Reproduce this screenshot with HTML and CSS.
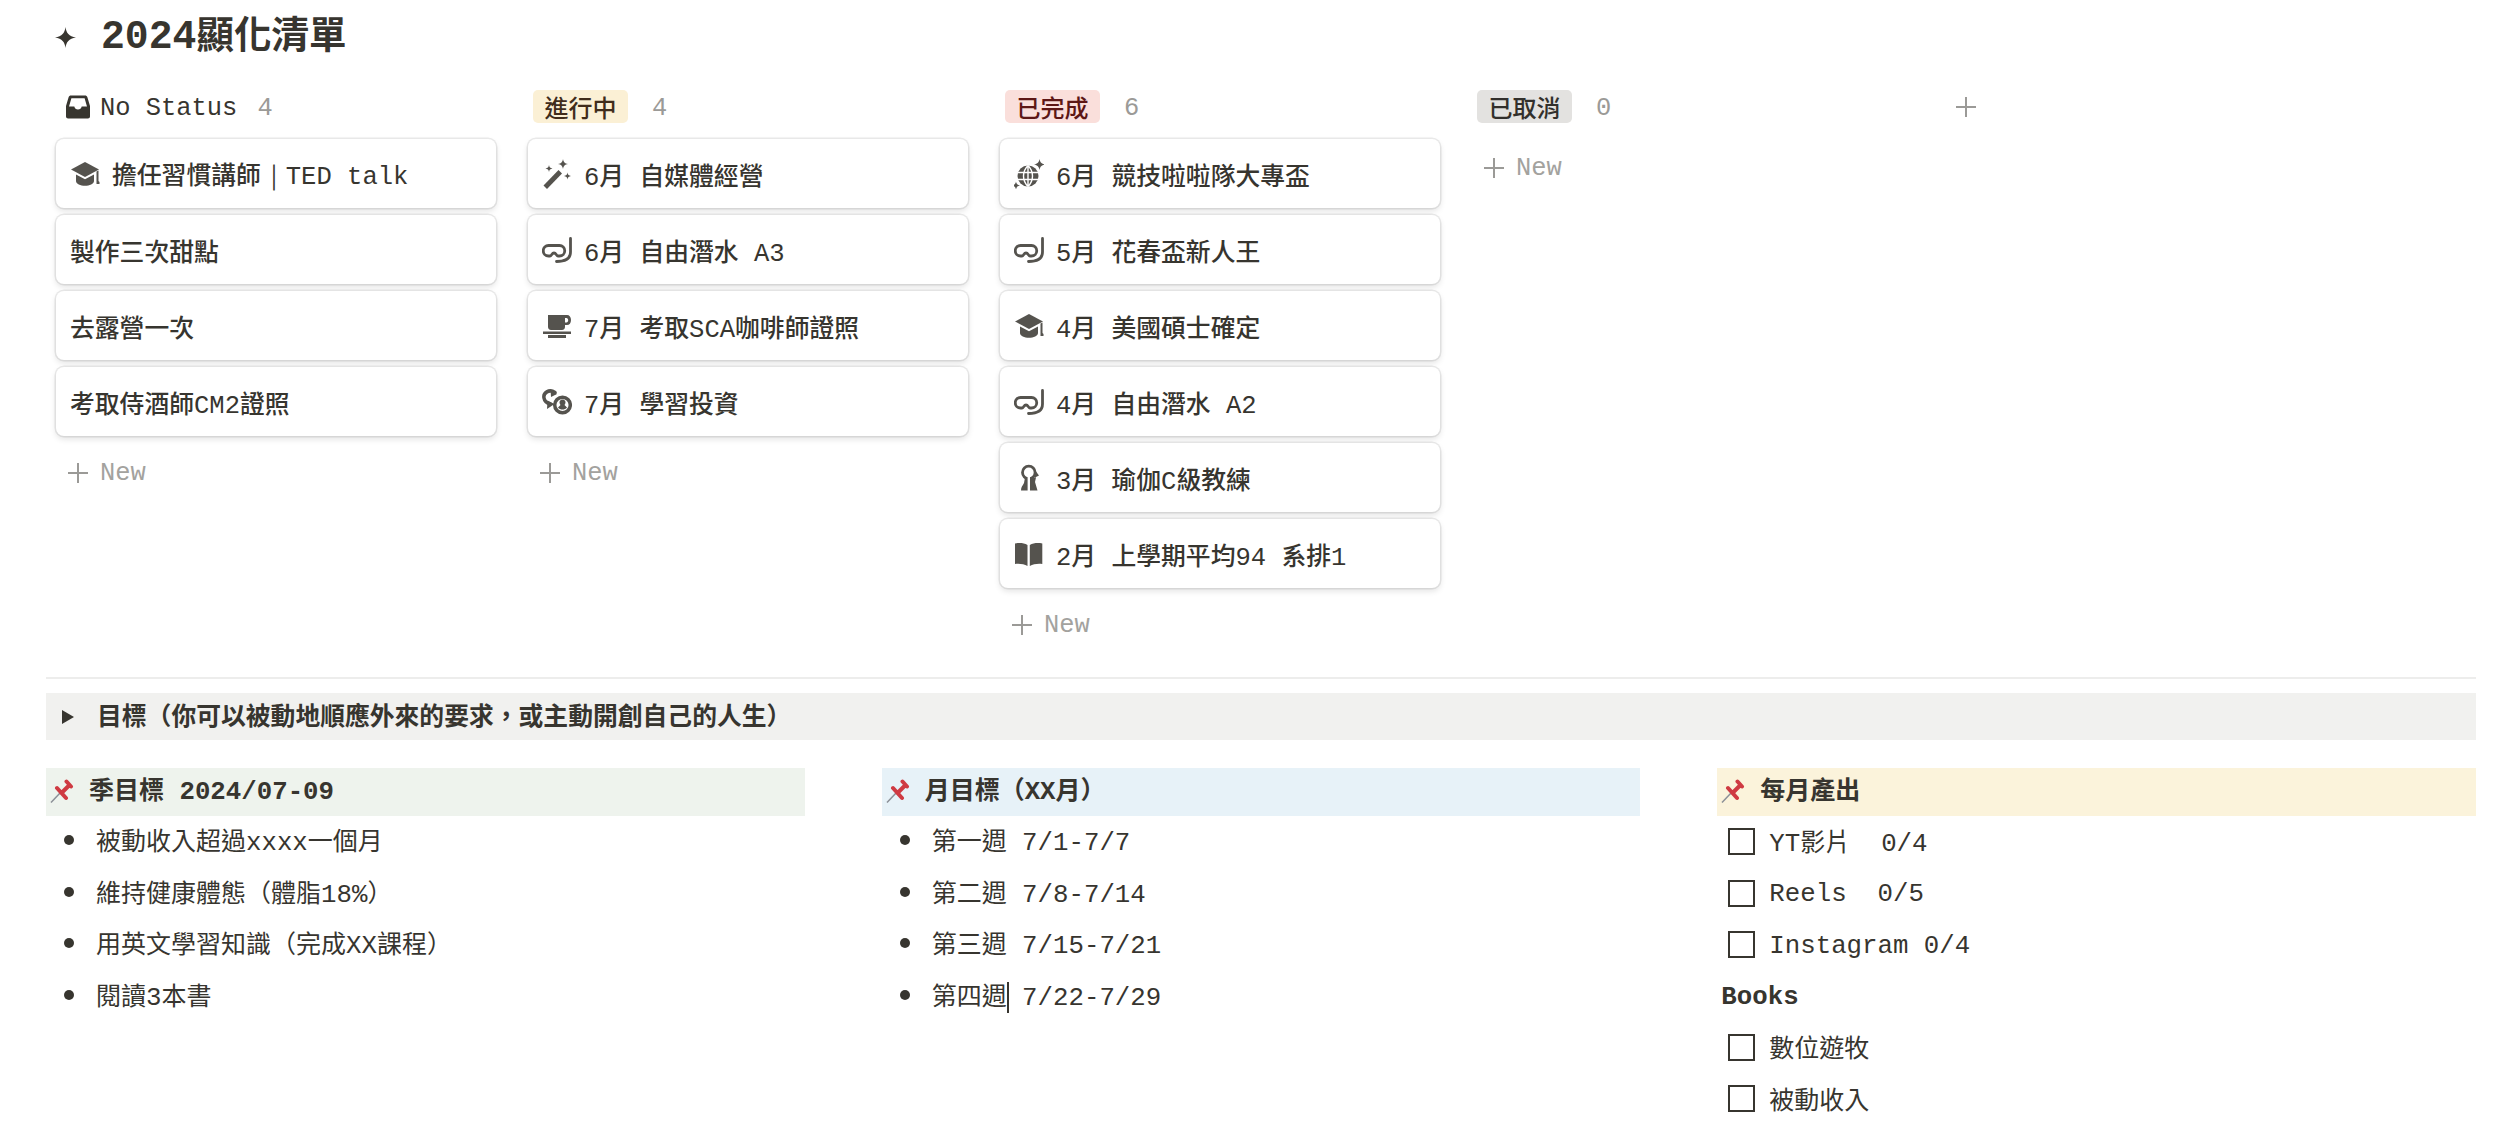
FILE: index.html
```html
<!DOCTYPE html>
<html lang="zh-Hant">
<head>
    <meta charset="UTF-8">
    <meta name="viewport" content="width=device-width, initial-scale=1.0">
    <title>2024顯化清單</title>
    <link rel="stylesheet" href="styles.css">
</head>
<body>

    <!-- icons -->
    <svg class="sprite" xmlns="http://www.w3.org/2000/svg">
        <symbol id="i-star" viewBox="0 0 22 22"><path d="M11 0c.9 6.600 3.400 9.500 11 11-7.600 1.500-10.100 4.400-11 11-.9-6.600-3.400-9.500-11-11 7.600-1.500 10.100-4.400 11-11z"/></symbol>
        <symbol id="i-inbox" viewBox="0 0 24 24"><path fill-rule="evenodd" d="M5 .5h14c1.200 0 2 .6 2.400 1.800L24 11v10.500c0 1.200-1 2-2 2H2c-1 0-2-.8-2-2V11l2.600-8.700C3 1.100 3.800.5 5 .5zm.4 2.700L3 11.500h5.300a3.800 3.800 0 0 0 7.400 0H21l-2.400-8.300z"/></symbol>
        <symbol id="i-cap" viewBox="0 0 30 30"><path d="M15 3 29 10.500 15 18 1 10.500z"/><path d="M6 15.500v6.500c0 2.800 4.500 4.800 9 4.800s9-2 9-4.800v-6.500l-9 4.800z"/><path d="M26.500 12.500v12.500h3v-2l-1-1V11.500z"/></symbol>
        <symbol id="i-wand" viewBox="0 0 30 30"><path d="M1.500 26.500 16.500 11l3.500 3.500L5 30z"/><path d="M21 0c.6 3.300 1.700 4.400 5 5-3.300.6-4.400 1.700-5 5-.6-3.300-1.700-4.400-5-5 3.300-.6 4.400-1.700 5-5zM7 6c.4 2.300 1.200 3.100 3.500 3.500C8.200 9.900 7.400 10.700 7 13c-.4-2.300-1.200-3.100-3.500-3.500C5.800 9.100 6.600 8.300 7 6zM25.500 13.500c.4 2.300 1.200 3.100 3.500 3.500-2.300.4-3.100 1.200-3.500 3.500-.4-2.300-1.200-3.100-3.500-3.500 2.300-.4 3.100-1.200 3.500-3.500z"/></symbol>
        <symbol id="i-snorkel" viewBox="0 0 30 30"><path class="line" d="M6.500 10.500h11a4.800 4.800 0 0 1 0 10.500h-1.500c-1.500 0-1.800-3-4-3s-2.500 3-4 3h-1.500a5.200 5.200 0 0 1 0-10.500z"/><path class="line" d="M28.500 3.500V17c0 6-5 9.500-14 9.500"/></symbol>
        <symbol id="i-cup" viewBox="0 0 30 30"><path fill-rule="evenodd" d="M6 4h19c2.500 0 4 2 4 5s-1.500 5-4 5h-2v2c0 2-1.500 3-3 3H9c-1.500 0-3-1-3-3zm17 3v4.500h1.500c1 0 1.700-1 1.700-2.200S25.500 7 24.500 7z"/><path d="M1 20.500h28v2.500H1zM6 24h18v3H6z"/></symbol>
        <symbol id="i-coins" viewBox="0 0 30 30"><path class="line wide" d="M13 5.500C7 1.500 1 6 2 11c.5 3 2.500 5 6 6"/><path d="M8.500 2 15 7l-6 3zM5 22l7.500-5-7-3.500z"/><circle class="line wide" cx="20.500" cy="18" r="7.800"/><path d="M20.500 12.500c2 0 3 1.400 3 3 0 1-.4 1.800-1 2.400l2.500 2.600c-1 1.500-3 2-4.500 2s-3.500-.5-4.500-2l2.500-2.600c-.6-.6-1-1.400-1-2.400 0-1.600 1-3 3-3z"/></symbol>
        <symbol id="i-disco" viewBox="0 0 30 30"><circle cx="14" cy="17" r="10.500"/><path class="grid" d="M4 13.500h20M4 20.500h20M14 6.500v21M14 6.500c-6 6-6 15 0 21M14 6.500c6 6 6 15 0 21"/><path d="M25.500 0c.6 3.500 1.800 4.700 5.500 5.500-3.700.8-4.900 2-5.500 5.500-.6-3.500-1.800-4.700-5.500-5.500 3.700-.8 4.900-2 5.500-5.500zM2 22.500c.5 2.600 1.400 3.500 4 4-2.600.5-3.500 1.400-4 4-.5-2.600-1.400-3.500-4-4 2.600-.5 3.500-1.400 4-4z"/></symbol>
        <symbol id="i-head" viewBox="0 0 30 30"><circle class="line" cx="14.800" cy="9.500" r="6.300"/><path d="M20.500 6.500l4.500 6-4 2zM11 14.500l-1 5.500C8.500 23 7 24 7 27.500h16.500L21 19l1-4.500z"/><path class="grid thick" d="M14.800 11v17"/></symbol>
        <symbol id="i-book" viewBox="0 0 30 30"><path d="M1 4.500c4.500-1 9-.5 12.500 1.500v21c-3.500-2-8-2.500-12.500-2zM15.800 6c3.500-2 8-2.500 12.500-1.500V25c-4.500-.5-9 0-12.500 2z"/></symbol>
        <symbol id="i-pin" viewBox="0 0 24 24"><path class="needle" d="M1 23.500 11 13"/><path class="pin-red" d="M7 9l9 10M11.500 14 19 6.500M16.500 2.500l4.500 5"/></symbol>
    </svg>

    <div class="page">

        <h1 class="title">
            <svg class="star"><use href="#i-star"/></svg>
            <span><span class="m">2024</span>顯化清單</span>
        </h1>

        <div class="board">

            <section class="col">
                <div class="col-head">
                    <svg class="inbox"><use href="#i-inbox"/></svg>
                    <span class="plain m">No Status</span>
                    <span class="count m">4</span>
                </div>
                <div class="card"><svg class="ico"><use href="#i-cap"/></svg><span>擔任習慣講師<span class="m">｜TED talk</span></span></div>
                <div class="card"><span>製作三次甜點</span></div>
                <div class="card"><span>去露營一次</span></div>
                <div class="card"><span>考取侍酒師<span class="m">CM2</span>證照</span></div>
                <div class="new"><svg class="plus" viewBox="0 0 20 20"><path d="M10 0v20M0 10h20"/></svg><span class="m">New</span></div>
            </section>

            <section class="col">
                <div class="col-head">
                    <span class="pill yellow">進行中</span>
                    <span class="count m">4</span>
                </div>
                <div class="card"><svg class="ico"><use href="#i-wand"/></svg><span><span class="m">6</span>月<span class="m"> </span>自媒體經營</span></div>
                <div class="card"><svg class="ico"><use href="#i-snorkel"/></svg><span><span class="m">6</span>月<span class="m"> </span>自由潛水<span class="m"> A3</span></span></div>
                <div class="card"><svg class="ico"><use href="#i-cup"/></svg><span><span class="m">7</span>月<span class="m"> </span>考取<span class="m">SCA</span>咖啡師證照</span></div>
                <div class="card"><svg class="ico"><use href="#i-coins"/></svg><span><span class="m">7</span>月<span class="m"> </span>學習投資</span></div>
                <div class="new"><svg class="plus" viewBox="0 0 20 20"><path d="M10 0v20M0 10h20"/></svg><span class="m">New</span></div>
            </section>

            <section class="col">
                <div class="col-head">
                    <span class="pill red">已完成</span>
                    <span class="count m">6</span>
                </div>
                <div class="card"><svg class="ico"><use href="#i-disco"/></svg><span><span class="m">6</span>月<span class="m"> </span>競技啦啦隊大專盃</span></div>
                <div class="card"><svg class="ico"><use href="#i-snorkel"/></svg><span><span class="m">5</span>月<span class="m"> </span>花春盃新人王</span></div>
                <div class="card"><svg class="ico"><use href="#i-cap"/></svg><span><span class="m">4</span>月<span class="m"> </span>美國碩士確定</span></div>
                <div class="card"><svg class="ico"><use href="#i-snorkel"/></svg><span><span class="m">4</span>月<span class="m"> </span>自由潛水<span class="m"> A2</span></span></div>
                <div class="card"><svg class="ico"><use href="#i-head"/></svg><span><span class="m">3</span>月<span class="m"> </span>瑜伽<span class="m">C</span>級教練</span></div>
                <div class="card"><svg class="ico"><use href="#i-book"/></svg><span><span class="m">2</span>月<span class="m"> </span>上學期平均<span class="m">94 </span>系排<span class="m">1</span></span></div>
                <div class="new"><svg class="plus" viewBox="0 0 20 20"><path d="M10 0v20M0 10h20"/></svg><span class="m">New</span></div>
            </section>

            <section class="col">
                <div class="col-head">
                    <span class="pill gray">已取消</span>
                    <span class="count m">0</span>
                </div>
                <div class="new"><svg class="plus" viewBox="0 0 20 20"><path d="M10 0v20M0 10h20"/></svg><span class="m">New</span></div>
            </section>

            <div class="add-col"><svg class="plus" viewBox="0 0 20 20"><path d="M10 0v20M0 10h20"/></svg></div>

        </div>

        <hr class="divider">

        <div class="toggle">
            <span class="arrow"></span>
            <span class="toggle-text">目標（你可以被動地順應外來的要求，或主動開創自己的人生）</span>
        </div>

        <div class="goals">

            <div>
                <h3 class="goal-title green"><svg class="pin"><use href="#i-pin"/></svg><span>季目標<span class="m"> 2024/07-09</span></span></h3>
                <ul class="bullets">
                    <li>被動收入超過<span class="m">xxxx</span>一個月</li>
                    <li>維持健康體態（體脂<span class="m">18%</span>）</li>
                    <li>用英文學習知識（完成<span class="m">XX</span>課程）</li>
                    <li>閱讀<span class="m">3</span>本書</li>
                </ul>
            </div>

            <div>
                <h3 class="goal-title blue"><svg class="pin"><use href="#i-pin"/></svg><span>月目標（<span class="m">XX</span>月）</span></h3>
                <ul class="bullets">
                    <li>第一週<span class="m"> 7/1-7/7</span></li>
                    <li>第二週<span class="m"> 7/8-7/14</span></li>
                    <li>第三週<span class="m"> 7/15-7/21</span></li>
                    <li>第四週<span class="caret"></span><span class="m"> 7/22-7/29</span></li>
                </ul>
            </div>

            <div>
                <h3 class="goal-title cream"><svg class="pin"><use href="#i-pin"/></svg><span>每月產出</span></h3>
                <ul class="checks">
                    <li><span class="box"></span><span><span class="m">YT</span>影片<span class="m">  0/4</span></span></li>
                    <li><span class="box"></span><span class="m">Reels  0/5</span></li>
                    <li><span class="box"></span><span class="m">Instagram 0/4</span></li>
                </ul>
                <p class="sub m">Books</p>
                <ul class="checks second">
                    <li><span class="box"></span><span>數位遊牧</span></li>
                    <li><span class="box"></span><span>被動收入</span></li>
                </ul>
            </div>

        </div>

    </div>

</body>
</html>
```
FILE: styles.css
```css
html, body {
    margin: 0;
    background: #fff;
    overflow: hidden;
}

body {
    color: #37352f;
    font-family: "Noto Sans CJK TC", "Noto Sans CJK SC", sans-serif;
    font-size: 25px;
}

.sprite {
    display: none;
}

.page {
    padding: 0 24px 0 46px;
    height: 1143px;
    box-sizing: border-box;
}

/* latin text sits in the mono face, a touch bigger than the cjk */
.m {
    font-family: "Liberation Mono", monospace;
    font-size: 1.03em;
    white-space: pre;
}

.title {
    display: flex;
    align-items: center;
    height: 70px;
    margin: 0;
    font-size: 37.500px;
    font-weight: 700;
    line-height: 50px;
}

.title .m {
    font-size: 1.06em;
}

.star {
    width: 21px;
    height: 21px;
    margin: 4px 25px 0 9px;
    fill: #37352f;
}

/* board */
.board {
    display: flex;
    gap: 32px;
    margin-top: 20px;
    padding-left: 10px;
    font-size: 24px;
}

.board .m {
    font-size: 1.06em;
}

.col {
    width: 440px;
    flex: none;
}

.col-head {
    display: flex;
    align-items: center;
    gap: 24px;
    height: 33px;
    margin-bottom: 16px;
    padding-left: 5px;
}

.col-head .m {
    margin-top: 3px;
}

.inbox {
    width: 24px;
    height: 24px;
    margin: 0 -14px 0 5px;
    fill: #37352f;
}

.plain {
    margin-right: -4px;
}

.count {
    color: #9b9a97;
}

.pill {
    padding: 0 11.500px;
    border-radius: 5px;
    font-weight: 500;
    line-height: 33px;
}

.yellow { background: #fbf0d5; color: #402c1b; }
.red { background: #fadfdb; color: #5d1715; }
.gray { background: #e3e2e0; color: #32302c; }

.card {
    display: flex;
    align-items: center;
    height: 69px;
    box-sizing: border-box;
    margin-bottom: 7px;
    padding: 1px 14px 0;
    border-radius: 8px;
    background: #fff;
    box-shadow: 0 0 0 1.5px rgba(15, 15, 15, 0.08), 0 3px 6px rgba(15, 15, 15, 0.12);
    font-size: 24.800px;
    font-weight: 500;
    white-space: pre;
}

.board .card .m {
    font-size: 1.03em;
}

.ico {
    width: 30px;
    height: 30px;
    flex: none;
    margin-right: 12px;
    fill: #55534e;
    overflow: visible;
}

.line {
    fill: none;
    stroke: #55534e;
    stroke-width: 2.800;
    stroke-linecap: round;
}

.wide {
    stroke-width: 3.500;
}

.grid {
    fill: none;
    stroke: #fff;
    stroke-width: 1.400;
}

.thick {
    stroke-width: 2.400;
}

.new {
    display: flex;
    align-items: center;
    height: 44px;
    margin-top: 15px;
    padding-left: 12px;
    color: #a3a29e;
}

.col-head + .new {
    margin-top: 23px;
}

.plus {
    width: 20px;
    height: 20px;
    flex: none;
    margin-right: 12px;
    fill: none;
    stroke: #9b9a97;
    stroke-width: 2;
}

.add-col {
    display: flex;
    align-items: center;
    height: 33px;
    padding-left: 12px;
}

/* middle */
.divider {
    height: 2px;
    margin: 30px 0 14px;
    border: 0;
    background: #ededec;
}

.toggle {
    display: flex;
    align-items: center;
    height: 47px;
    background: #f1f1ef;
    font-size: 24.800px;
    font-weight: 700;
}

.toggle-text {
    margin-bottom: 6px;
}

.arrow {
    width: 0;
    height: 0;
    margin: 0 23px 0 16px;
    border-top: 7px solid transparent;
    border-bottom: 7px solid transparent;
    border-left: 12px solid #37352f;
}

.goals {
    display: grid;
    grid-template-columns: repeat(3, 1fr);
    gap: 77px;
    margin-top: 28px;
}

.goal-title {
    display: flex;
    align-items: center;
    height: 48px;
    margin: 0;
    padding-left: 4px;
    font-size: 25px;
    font-weight: 700;
}

.goal-title > span {
    margin-bottom: 8px;
}

.green { background: #eef3ed; }
.blue { background: #e7f2f8; }
.cream { background: #fbf3db; }

.pin {
    width: 24px;
    height: 24px;
    flex: none;
    margin: 0 15px 3px 0;
}

.needle {
    fill: none;
    stroke: #8b9097;
    stroke-width: 1.500;
}

.pin-red {
    fill: none;
    stroke: #cf3a42;
    stroke-width: 4;
    stroke-linecap: round;
}

.bullets, .checks {
    margin: -2px 0 0;
    padding: 0;
    list-style: none;
}

.checks {
    margin-top: 0;
}

.bullets li, .checks li {
    display: flex;
    align-items: center;
    height: 51.500px;
    white-space: pre;
}

.bullets li {
    display: block;
    position: relative;
    padding-left: 50px;
    line-height: 51.500px;
}

.bullets li::before {
    content: "";
    position: absolute;
    left: 18px;
    top: 21px;
    width: 10px;
    height: 10px;
    border-radius: 50%;
    background: #37352f;
}

.checks li > .m {
    margin-top: 3px;
}

.checks li > span:last-child:not(.m) {
    margin-bottom: 2px;
}

.caret {
    display: inline-block;
    width: 0;
    height: 31px;
    margin-right: -2px;
    border-left: 2px solid #37352f;
    vertical-align: middle;
}

.box {
    width: 27px;
    height: 27px;
    box-sizing: border-box;
    flex: none;
    margin: 0 14px 0 11px;
    border: 2.500px solid #37352f;
}

.sub {
    height: 51px;
    margin: 0;
    padding: 1px 0 0 4px;
    box-sizing: border-box;
    font-weight: 700;
    line-height: 51px;
}
```
